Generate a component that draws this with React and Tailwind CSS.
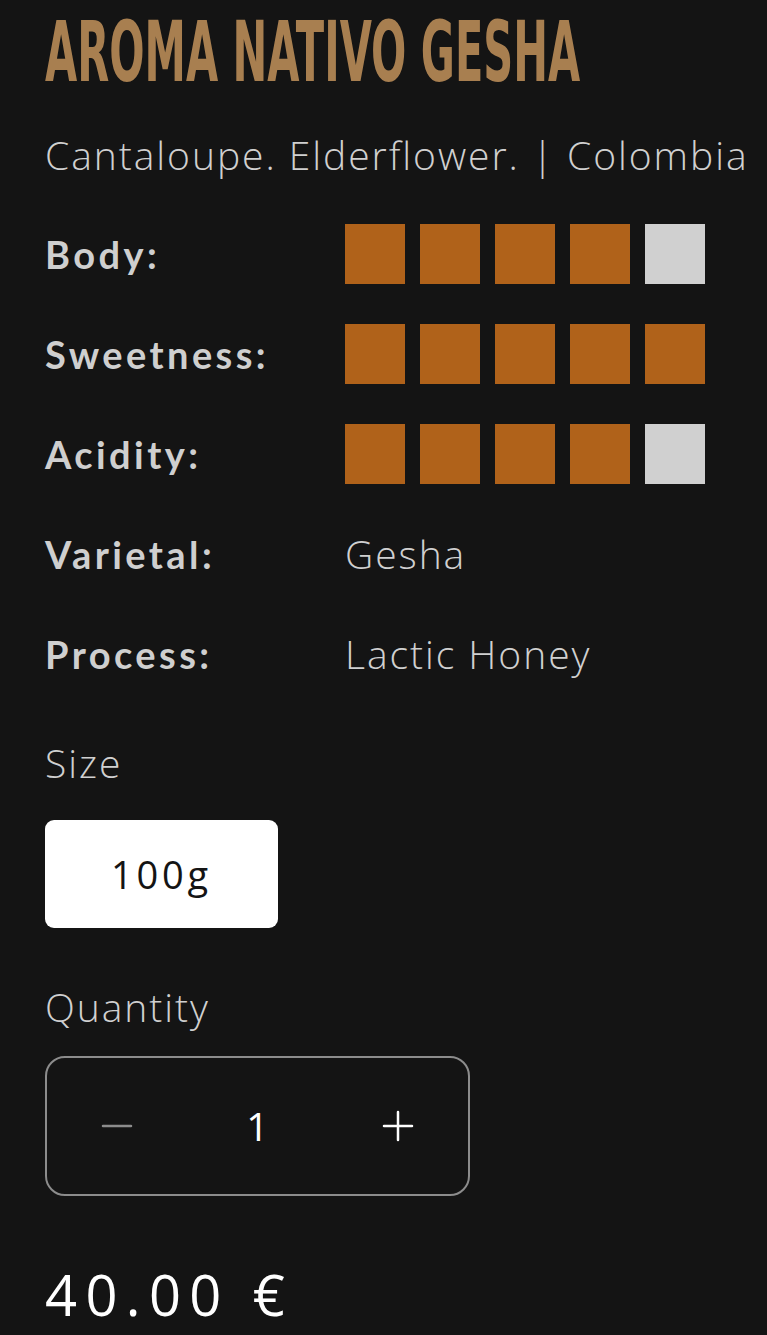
import { Minus, Plus } from 'lucide-react';

const ratings = [
  { label: 'Body:', value: 4 },
  { label: 'Sweetness:', value: 5 },
  { label: 'Acidity:', value: 4 },
];

const details = [
  { label: 'Varietal:', value: 'Gesha' },
  { label: 'Process:', value: 'Lactic Honey' },
];

const body = "font-['Open_Sans','Lato',sans-serif]";
const label = "font-['Lato','Open_Sans',sans-serif] font-bold";

export default function App() {
  return (
    <div className="min-h-screen overflow-hidden bg-[#141414] px-[45px] pb-10 text-[#d4d4d4]">
      <div className="h-[104px] overflow-hidden pt-[10px]">
        <h1 className="inline-block w-max origin-left scale-x-[0.55] whitespace-nowrap font-['DejaVu_Sans_Condensed','DejaVu_Sans',sans-serif] text-[84px] font-bold leading-[84px] text-[#a87f50]">
          AROMA NATIVO GESHA
        </h1>
      </div>

      <p className={`${body} mt-[26px] whitespace-nowrap text-[39px] font-light leading-[50px] tracking-[0.05em] text-[#d0d0d0]`}>
        Cantaloupe. Elderflower. | Colombia
      </p>

      <div className="mt-[24px]">
        {ratings.map((r) => (
          <div key={r.label} className="flex h-[100px] items-center">
            <span className={`${label} w-[300px] text-[38px] tracking-[0.09em] text-[#cfcfcf]`}>{r.label}</span>
            <div className="flex gap-[15px]">
              {[0, 1, 2, 3, 4].map((i) => (
                <div
                  key={i}
                  className={`h-[60px] w-[60px] ${i < r.value ? 'bg-[#b0621a]' : 'bg-[#d0d0d0]'}`}
                />
              ))}
            </div>
          </div>
        ))}
        {details.map((d) => (
          <div key={d.label} className="flex h-[100px] items-center">
            <span className={`${label} w-[300px] text-[38px] tracking-[0.09em] text-[#cfcfcf]`}>{d.label}</span>
            <span className={`${body} text-[39px] font-light tracking-[0.05em] text-[#d0d0d0]`}>{d.value}</span>
          </div>
        ))}
      </div>

      <p className={`${body} mt-[34px] text-[39px] font-light leading-[50px] tracking-[0.05em] text-[#d0d0d0]`}>Size</p>

      <button className={`${body} mt-[32px] flex h-[108px] w-[233px] items-center justify-center rounded-[9px] bg-white text-[38px] tracking-[0.1em] text-[#141414]`}>
        100g
      </button>

      <p className={`${body} mt-[54px] text-[39px] font-light leading-[50px] tracking-[0.05em] text-[#d0d0d0]`}>Quantity</p>

      <div className="mt-[24px] flex h-[140px] w-[425px] items-center rounded-[20px] border-[2.5px] border-[#8c8c8c]">
        <button className="flex w-[140px] items-center justify-center text-[#8c8c8c]">
          <Minus size={48} strokeWidth={2.5} absoluteStrokeWidth />
        </button>
        <span className={`${body} flex-1 text-center text-[39px] text-white`}>1</span>
        <button className="flex w-[140px] items-center justify-center text-white">
          <Plus size={48} strokeWidth={2.5} absoluteStrokeWidth />
        </button>
      </div>

      <p className={`${body} mt-[56px] text-[56px] tracking-[0.15em] text-white`}>40.00 €</p>
    </div>
  );
}
